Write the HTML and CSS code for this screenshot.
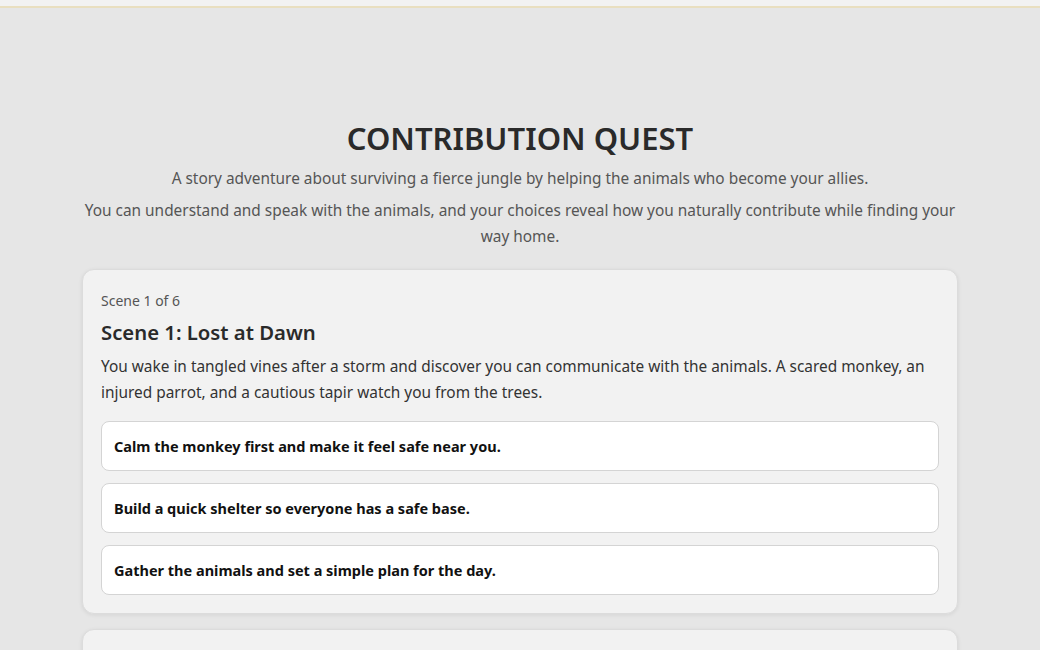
FILE: index.html
```html
<!DOCTYPE html>
<html lang="en">
<head>
<meta charset="utf-8">
<title>Contribution Quest</title>
<link rel="stylesheet" href="styles.css">
</head>
<body>
<div class="topbar"></div>
<main class="page">
  <header class="intro">
    <h1 class="title">CONTRIBUTION QUEST</h1>
    <p class="lead">A story adventure about surviving a fierce jungle by helping the animals who become your allies.</p>
    <p class="lead">You can understand and speak with the animals, and your choices reveal how you naturally contribute while finding your way home.</p>
  </header>
  <section class="card">
    <div class="meta">Scene 1 of 6</div>
    <h2 class="scene-title">Scene 1: Lost at Dawn</h2>
    <p class="scene-text">You wake in tangled vines after a storm and discover you can communicate with the animals. A scared monkey, an injured parrot, and a cautious tapir watch you from the trees.</p>
    <div class="choices">
      <button class="choice">Calm the monkey first and make it feel safe near you.</button>
      <button class="choice">Build a quick shelter so everyone has a safe base.</button>
      <button class="choice">Gather the animals and set a simple plan for the day.</button>
    </div>
  </section>
  <section class="card card-next"></section>
</main>
</body>
</html>
```
FILE: styles.css
```css
* { box-sizing: border-box; }
html, body { margin: 0; padding: 0; }
body {
  background: #e6e6e6;
  font-family: "Noto Sans", "Open Sans", sans-serif;
  color: #2b2b2b;
}
.topbar {
  height: 8px;
  background: #f2f2f2;
  border-bottom: 2px solid #e9dfc0;
}
.page {
  max-width: 876px;
  margin: 0 auto;
  padding-top: 110px;
}
.intro { text-align: center; }
.title {
  margin: 0;
  font-size: 31px;
  line-height: 40px;
  font-weight: 600;
  color: #2a2a2a;
}
.lead {
  margin: 6px 0 0;
  font-size: 15.4px;
  line-height: 26px;
  color: #555;
}
.lead:first-of-type { margin-top: 8px; }
.card {
  margin-top: 19px;
  background: #f2f2f2;
  border: 1px solid #dcdcdc;
  border-radius: 12px;
  box-shadow: 0 1px 4px rgba(0,0,0,0.08);
  padding: 21px 18px 18px;
}
.card-next { margin-top: 15px; height: 60px; }
.meta {
  font-size: 14px;
  line-height: 20px;
  color: #555;
}
.scene-title {
  margin: 7px 0 0;
  font-size: 20.3px;
  line-height: 28px;
  font-weight: 600;
  color: #2a2a2a;
}
.scene-text {
  margin: 8px 0 0;
  font-size: 15.4px;
  line-height: 26px;
  color: #333;
}
.choices {
  margin-top: 15px;
  display: flex;
  flex-direction: column;
  gap: 12px;
}
.choice {
  display: block;
  width: 100%;
  height: 50px;
  text-align: left;
  background: #fff;
  border: 1px solid #d4d4d4;
  border-radius: 8px;
  padding: 0 12px;
  font-family: inherit;
  font-size: 14.5px;
  font-weight: 700;
  color: #111;
  cursor: pointer;
}
```
